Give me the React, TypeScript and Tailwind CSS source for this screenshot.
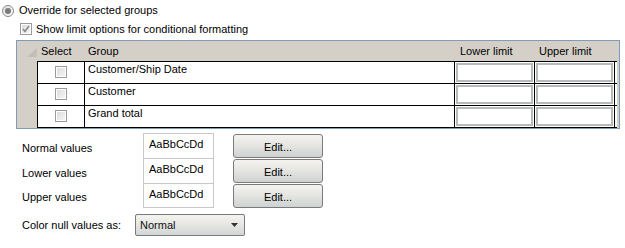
import React from "react";

const font = { fontFamily: '"Liberation Sans", Arial, sans-serif' };

function SmallCheck({ checked }: { checked?: boolean }) {
  return (
    <div className="w-[12px] h-[12px] border border-[#9a9a9a] bg-white p-[1px] shrink-0">
      <div className="w-full h-full bg-linear-to-br from-[#dcdcdc] to-[#f4f4f4] flex items-center justify-center">
        {checked && (
          <svg width="8" height="8" viewBox="0 0 8 8">
            <path d="M1 4 L3 6.5 L7 1" stroke="#8a8a8a" strokeWidth="1.6" fill="none" />
          </svg>
        )}
      </div>
    </div>
  );
}

function Row({ label }: { label: string }) {
  return (
    <div className="flex h-[22px]">
      <div className="w-[20px] bg-[#d4d0c8]" />
      <div className="flex flex-1 border-l border-t border-black bg-white">
        <div className="w-[47px] border-r border-black flex justify-center pt-[4px]">
          <SmallCheck />
        </div>
        <div className="w-[370px] border-r border-black pl-[3px] pt-[1px] leading-[13px]">{label}</div>
        <div className="w-[80px] border-r border-black p-[1px]">
          <div className="w-full h-full border-2 border-[#b6baba] bg-white" />
        </div>
        <div className="w-[80px] border-r border-black p-[1px]">
          <div className="w-full h-full border-2 border-[#b6baba] bg-white" />
        </div>
      </div>
      <div className="w-[2px] bg-[#d4d0c8]" />
    </div>
  );
}

function EditButton() {
  return (
    <div className="w-[90px] h-[24px] rounded-[3px] border border-[#7a7a7a] bg-linear-to-b from-[#f4f3ef] via-[#e4e4e1] to-[#cdd2d2] flex items-center justify-center pt-[2px] text-[11px]">
      Edit...
    </div>
  );
}

export default function App() {
  return (
    <div className="w-[625px] h-[248px] bg-white text-black text-[11px] leading-[13px] overflow-hidden" style={font}>
      {/* Radio */}
      <div className="flex items-center pl-[2px] pt-[3px] h-[15px] box-content">
        <div className="w-[12px] h-[12px] rounded-full border border-[#8a8c8c] bg-linear-to-br from-[#e0e0e0] to-[#fafafa] flex items-center justify-center">
          <div className="w-[6px] h-[6px] rounded-full bg-[#7a7a7a]" />
        </div>
        <span className="ml-[5px]">Override for selected groups</span>
      </div>
      {/* Checkbox */}
      <div className="flex items-center pl-[20px] mt-[4px] h-[14px]">
        <SmallCheck checked />
        <span className="ml-[4px]">Show limit options for conditional formatting</span>
      </div>
      {/* Table */}
      <div className="ml-[16px] mt-[4px] w-[604px] h-[89px] border border-[#7f9db9] bg-[#d4d0c8] flex flex-col">
        <div className="flex h-[20px] items-center">
          <div className="w-[20px] h-full relative">
            <svg className="absolute left-[10px] top-[7px]" width="10" height="9" viewBox="0 0 10 9">
              <polygon points="10,0 10,9 0,9" fill="#c2bfb8" />
            </svg>
          </div>
          <div className="w-[48px] pl-[4px]">Select</div>
          <div className="w-[371px] pl-[3px]">Group</div>
          <div className="w-[80px] pl-[4px]">Lower limit</div>
          <div className="w-[80px] pl-[3px]">Upper limit</div>
        </div>
        <Row label="Customer/Ship Date" />
        <Row label="Customer" />
        <Row label="Grand total" />
        <div className="flex h-[1px]">
          <div className="w-[20px]" />
          <div className="w-[580px] bg-black" />
        </div>
      </div>
      {/* Styles */}
      <div className="flex items-start mt-[4px] ml-[22px]">
        <div className="w-[121px] h-[75px] flex flex-col pt-[3px]">
          <div className="h-[25px] flex items-center">Normal values</div>
          <div className="h-[25px] flex items-center">Lower values</div>
          <div className="h-[22px] flex items-center">Upper values</div>
        </div>
        <div className="w-[71px] h-[75px] border border-[#c8c8c8] flex flex-col">
          <div className="h-[25px] border-b border-[#c8c8c8] pl-[5px] pt-[4px]">AaBbCcDd</div>
          <div className="h-[25px] border-b border-[#c8c8c8] pl-[5px] pt-[4px]">AaBbCcDd</div>
          <div className="h-[23px] pl-[5px] pt-[4px]">AaBbCcDd</div>
        </div>
        <div className="ml-[19px] flex flex-col gap-[1px] pt-[1px]">
          <EditButton />
          <EditButton />
          <EditButton />
        </div>
      </div>
      {/* Color null */}
      <div className="flex items-center ml-[22px] mt-[6px]">
        <div className="w-[113px]">Color null values as:</div>
        <div className="w-[110px] h-[22px] rounded-[2px] border border-[#7a7a7a] bg-linear-to-b from-[#f4f3ef] via-[#e6e6e3] to-[#d2d6d6] flex items-center pl-[4px] pr-[6px] justify-between">
          <span className="text-[#111]">Normal</span>
          <svg width="7" height="4" viewBox="0 0 7 4">
            <polygon points="0,0 7,0 3.5,4" fill="#333" />
          </svg>
        </div>
      </div>
    </div>
  );
}
